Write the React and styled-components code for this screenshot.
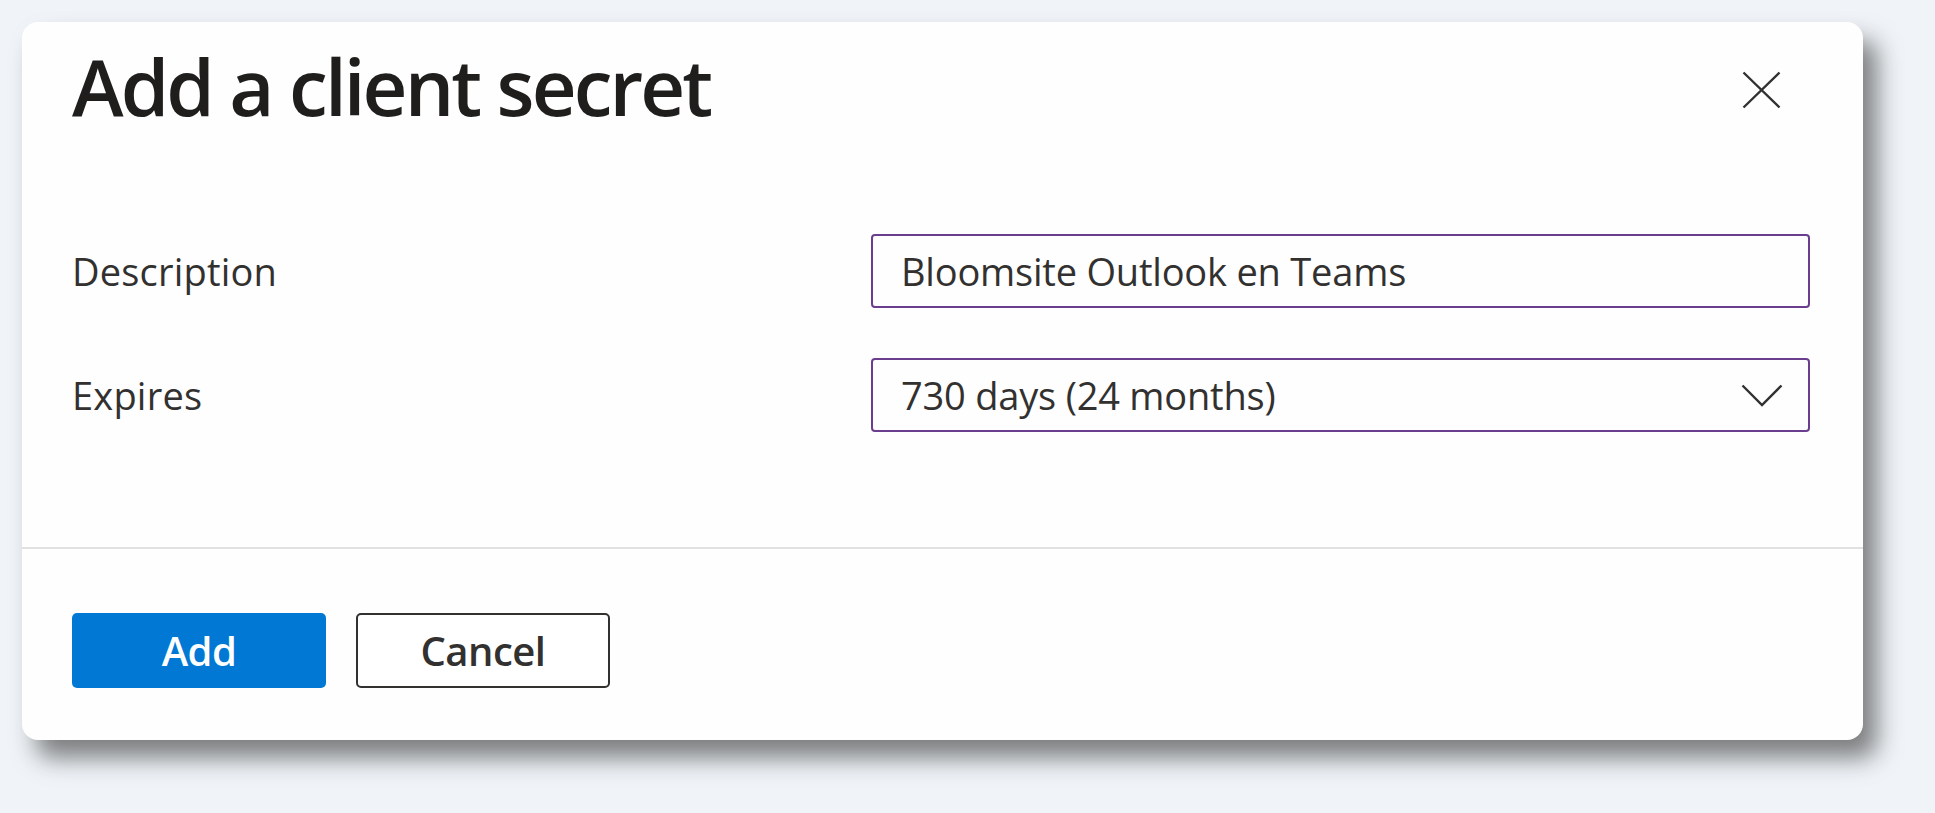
import React from 'react';
import styled, { createGlobalStyle } from 'styled-components';

const GlobalStyle = createGlobalStyle`
  html, body {
    margin: 0;
    padding: 0;
    background: #f0f4f8;
    font-family: "Open Sans", "Noto Sans", "Liberation Sans", sans-serif;
  }
`;

// Page holding the dialog
const Page = styled.div`
  width: 1935px;
  height: 813px;
  padding: 22px 0 0 22px;
  box-sizing: border-box;
  overflow: hidden;
`;

// Dialog panel
const Dialog = styled.div`
  width: 1841px;
  height: 718px;
  background: #fefefe;
  border-radius: 16px;
  box-shadow: 14px 18px 24px rgba(30, 30, 30, 0.55);
  display: flex;
  flex-direction: column;
  box-sizing: border-box;
`;

const Header = styled.div`
  display: flex;
  justify-content: space-between;
  align-items: flex-start;
  padding: 17px 82px 0 50px;
`;

const Title = styled.h1`
  margin: 0;
  font-size: 78px;
  line-height: 94px;
  font-weight: 600;
  letter-spacing: -2.9px;
  color: #1f1e1d;
`;

const CloseButton = styled.button`
  margin-top: 32px;
  padding: 0;
  border: none;
  background: none;
  width: 39px;
  height: 38px;
  display: flex;
  color: #323130;
`;

const Form = styled.div`
  display: flex;
  flex-direction: column;
  gap: 50px;
  padding: 101px 53px 115px 50px;
`;

const Row = styled.div`
  display: grid;
  grid-template-columns: 799px 1fr;
  align-items: center;
`;

const Label = styled.label`
  font-size: 38px;
  color: #323130;
  letter-spacing: 0.2px;
`;

const Field = styled.div`
  height: 74px;
  box-sizing: border-box;
  border: 2px solid #6b3d8e;
  border-radius: 4px;
  display: flex;
  align-items: center;
  justify-content: space-between;
  padding: 0 25px 0 28px;
  font-size: 38px;
  color: #323130;
  letter-spacing: -0.2px;
`;

const Divider = styled.div`
  height: 2px;
  background: #e1e1e1;
`;

const Footer = styled.div`
  display: flex;
  gap: 30px;
  padding: 64px 50px 0;
`;

const Button = styled.button`
  width: 254px;
  height: 75px;
  box-sizing: border-box;
  border-radius: 5px;
  font-family: inherit;
  font-size: 40px;
  font-weight: 600;
  letter-spacing: -0.5px;
  cursor: pointer;
  background: ${(p) => (p.$primary ? '#0078d4' : '#ffffff')};
  color: ${(p) => (p.$primary ? '#ffffff' : '#323130')};
  border: ${(p) => (p.$primary ? 'none' : '2px solid #323130')};
`;

const App = () => {
  return (
    <Page>
      <GlobalStyle />
      <Dialog>
        <Header>
          <Title>Add a client secret</Title>
          <CloseButton aria-label="Close">
            <svg width="39" height="38" viewBox="0 0 39 38" fill="none" stroke="currentColor" strokeWidth="2.4">
              <path d="M1.5 1.5 L37.5 36.5 M37.5 1.5 L1.5 36.5" />
            </svg>
          </CloseButton>
        </Header>

        <Form>
          <Row>
            <Label>Description</Label>
            <Field>Bloomsite Outlook en Teams</Field>
          </Row>
          <Row>
            <Label>Expires</Label>
            <Field>
              730 days (24 months)
              <svg width="42" height="23" viewBox="0 0 42 23" fill="none" stroke="#323130" strokeWidth="2.4">
                <path d="M1.5 1.5 L21 21 L40.5 1.5" />
              </svg>
            </Field>
          </Row>
        </Form>

        <Divider />

        <Footer>
          <Button $primary>Add</Button>
          <Button>Cancel</Button>
        </Footer>
      </Dialog>
    </Page>
  );
};

export default App;
